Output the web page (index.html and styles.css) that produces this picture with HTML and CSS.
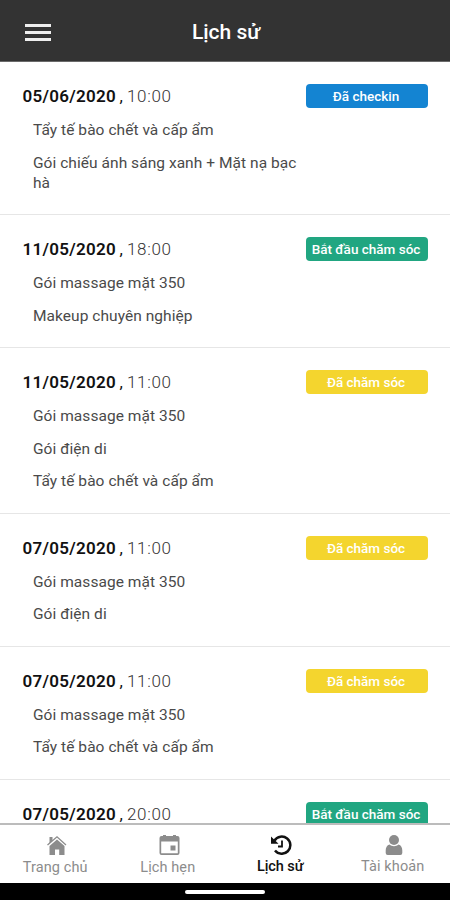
FILE: index.html
```
<!DOCTYPE html>
<html lang="vi">
<head>
<meta charset="utf-8">
<title>Lịch sử</title>
<link rel="stylesheet" href="styles.css">
</head>
<body>
<div class="app">
  <header class="bar">
    <div class="menu"><i></i><i></i><i></i></div>
    <h1>Lịch sử</h1>
  </header>
  <main class="list">
    <section class="entry first">
      <div class="head"><b>05/06/2020</b><span class="comma">,</span><span class="time">10:00</span><span class="badge blue">Đã checkin</span></div>
      <p>Tẩy tế bào chết và cấp ẩm</p>
      <p>Gói chiếu ánh sáng xanh + Mặt nạ bạc hà</p>
    </section>
    <section class="entry">
      <div class="head"><b>11/05/2020</b><span class="comma">,</span><span class="time">18:00</span><span class="badge green">Bắt đầu chăm sóc</span></div>
      <p>Gói massage mặt 350</p>
      <p>Makeup chuyên nghiệp</p>
    </section>
    <section class="entry">
      <div class="head"><b>11/05/2020</b><span class="comma">,</span><span class="time">11:00</span><span class="badge yellow">Đã chăm sóc</span></div>
      <p>Gói massage mặt 350</p>
      <p>Gói điện di</p>
      <p>Tẩy tế bào chết và cấp ẩm</p>
    </section>
    <section class="entry">
      <div class="head"><b>07/05/2020</b><span class="comma">,</span><span class="time">11:00</span><span class="badge yellow">Đã chăm sóc</span></div>
      <p>Gói massage mặt 350</p>
      <p>Gói điện di</p>
    </section>
    <section class="entry">
      <div class="head"><b>07/05/2020</b><span class="comma">,</span><span class="time">11:00</span><span class="badge yellow">Đã chăm sóc</span></div>
      <p>Gói massage mặt 350</p>
      <p>Tẩy tế bào chết và cấp ẩm</p>
    </section>
    <section class="entry">
      <div class="head"><b>07/05/2020</b><span class="comma">,</span><span class="time">20:00</span><span class="badge green">Bắt đầu chăm sóc</span></div>
    </section>
  </main>
  <nav class="tabs">
    <div class="tab low">
      <svg width="22" height="20" viewBox="0 0 22 20"><path fill="currentColor" d="M12 4.500 19.500 11V20H14.200v-5.500H10V20H4.500v-9z"/><path fill="none" stroke="currentColor" stroke-width="1.300" d="M2.500 10 12 1.800l9 8.200"/><path fill="currentColor" d="M4.500 2h3v4l-3 2.800z"/></svg>
      <span>Trang chủ</span>
    </div>
    <div class="tab low">
      <svg width="22" height="20" viewBox="0 0 22 20"><path fill="currentColor" fill-rule="evenodd" d="M3.500 1H5V0h3v1h7V0h3v1h1.500a2 2 0 0 1 2 2v15a2 2 0 0 1-2 2h-16a2 2 0 0 1-2-2V3a2 2 0 0 1 2-2zM3.200 6.500v11.800h16.600V6.500zM12.500 10.500h5v5h-5z"/></svg>
      <span>Lịch hẹn</span>
    </div>
    <div class="tab active">
      <svg width="22" height="20" viewBox="0 0 22 20"><path fill="none" stroke="currentColor" stroke-width="2.500" d="M4.500 5.500A8.600 8.600 0 1 1 5 15.500"/><path fill="currentColor" d="M1 1.500v7.200h7.500z"/><path fill="none" stroke="currentColor" stroke-width="1.800" d="M12 5.500v6H8"/></svg>
      <span>Lịch sử</span>
    </div>
    <div class="tab">
      <svg width="22" height="20" viewBox="0 0 22 20"><circle cx="11" cy="5" r="5" fill="currentColor"/><path fill="currentColor" d="M6.500 9.500c2.500 2.200 6.500 2.200 9 0 2.600.8 3.800 3 3.800 6V18a2 2 0 0 1-2 2H4.700a2 2 0 0 1-2-2v-2.500c0-3 1.200-5.200 3.800-6z"/></svg>
      <span>Tài khoản</span>
    </div>
  </nav>
  <div class="system"><i></i></div>
</div>
</body>
</html>
```
FILE: styles.css
```
* { box-sizing: border-box; }
body { margin: 0; font-family: Roboto, "Liberation Sans", sans-serif; background: #fff; }
.app { width: 450px; height: 900px; display: flex; flex-direction: column; overflow: hidden; }
.bar { height: 62px; flex: none; background: #333; border-bottom: 1px solid #6a6a6a; display: grid; grid-template-columns: 64px 1fr 64px; align-items: center; padding-top: 3px; }
.menu { display: flex; flex-direction: column; gap: 4px; margin-left: 25px; width: 26px; }
.menu i { height: 3px; background: #eee; }
h1 { margin: 0; color: #fff; font-size: 21px; line-height: 26px; font-weight: 500; text-align: center; padding-left: 2px; }
.list { flex: 1; min-height: 0; overflow: hidden; }
.entry { padding: 22px 22px 21.500px 22.500px; border-bottom: 1px solid #e6e6e6; }
.first { padding-bottom: 21.500px; }
.head { display: flex; align-items: center; height: 24px; margin-bottom: 12px; font-size: 17px; color: #111; }
.head b { font-weight: 600; width: 97px; letter-spacing: .3px; }
.comma { width: 7.500px; }
.time { color: #333; font-weight: 300; letter-spacing: .65px; }
.badge { margin-left: auto; width: 122px; height: 24px; border-radius: 4px; color: #fff; font-size: 13.500px; font-weight: 500; line-height: 25px; text-align: center; letter-spacing: 0; padding-right: 2px; white-space: nowrap; }
.blue { background: #1484d2; }
.green { background: #21a681; }
.yellow { background: #f4d52e; }
.entry p { margin: 0 0 0 10.500px; font-size: 15.500px; line-height: 20px; color: #4a4a4a; width: 275px; letter-spacing: .05px; }
.entry p + p { margin-top: 12.500px; }
.tabs { flex: none; height: 60px; border-top: 2px solid #bcbcbc; background: #fff; display: grid; grid-template-columns: repeat(4, 112.500px); }
.tab { display: flex; flex-direction: column; align-items: center; padding-top: 10px; color: #8c8c8c; font-size: 14.500px; line-height: 18px; letter-spacing: .1px; }
.tab svg { display: block; }
.tab span { margin-top: 3px; margin-right: 2px; }
.low span { margin-top: 4px; }
.active { color: #111; font-weight: 500; letter-spacing: -.1px; }
.system { flex: none; height: 17px; background: #000; display: flex; justify-content: center; align-items: center; }
.system i { width: 80px; height: 4px; border-radius: 2px; background: #fff; }
```
